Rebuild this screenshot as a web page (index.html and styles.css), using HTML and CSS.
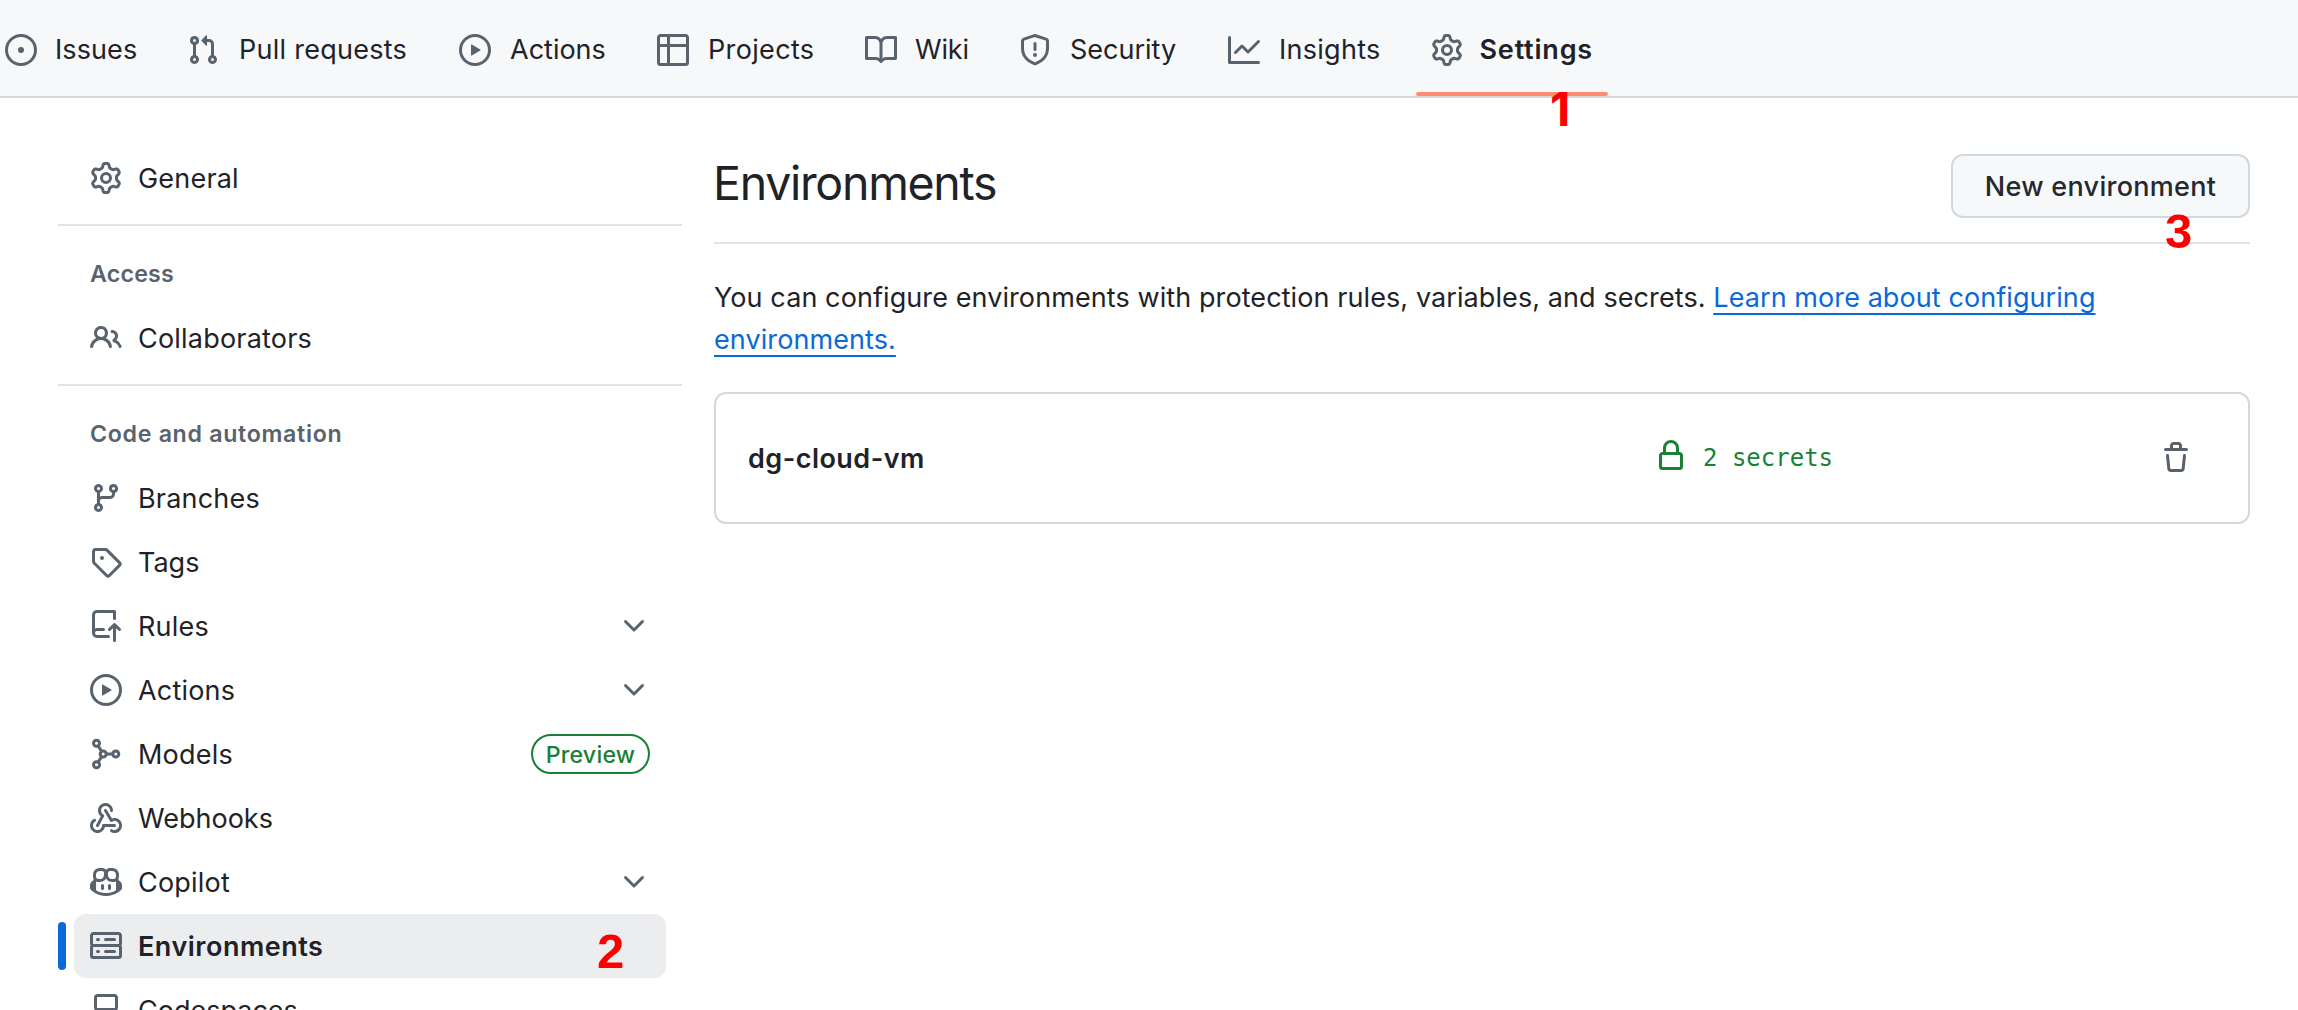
FILE: index.html
```
<!DOCTYPE html>
<html lang="en">
<head>
<meta charset="utf-8">
<title>Environments</title>
<link rel="stylesheet" href="styles.css">
</head>
<body>
<svg class="sprite" aria-hidden="true">
  <symbol id="issue" viewBox="0 0 16 16"><path d="M8 9.5a1.5 1.5 0 1 0 0-3 1.5 1.5 0 0 0 0 3Z"/><path d="M8 0a8 8 0 1 1 0 16A8 8 0 0 1 8 0ZM1.5 8a6.5 6.5 0 1 0 13 0 6.5 6.5 0 0 0-13 0Z"/></symbol>
  <symbol id="pull" viewBox="0 0 16 16"><path d="M1.5 3.25a2.25 2.25 0 1 1 3 2.122v5.256a2.251 2.251 0 1 1-1.5 0V5.372A2.25 2.25 0 0 1 1.5 3.25Zm5.677-.177L9.573.677A.25.25 0 0 1 10 .854V2.5h1A2.5 2.5 0 0 1 13.5 5v5.628a2.251 2.251 0 1 1-1.5 0V5a1 1 0 0 0-1-1h-1v1.646a.25.25 0 0 1-.427.177L7.177 3.427a.25.25 0 0 1 0-.354ZM3.75 2.5a.75.75 0 1 0 0 1.5.75.75 0 0 0 0-1.5Zm0 9.5a.75.75 0 1 0 0 1.5.75.75 0 0 0 0-1.5Zm8.25.75a.75.75 0 1 0 1.5 0 .75.75 0 0 0-1.5 0Z"/></symbol>
  <symbol id="play" viewBox="0 0 16 16"><path d="M8 0a8 8 0 1 1 0 16A8 8 0 0 1 8 0ZM1.5 8a6.5 6.5 0 1 0 13 0 6.5 6.5 0 0 0-13 0Zm4.879-2.773 4.264 2.559a.25.25 0 0 1 0 .428l-4.264 2.559A.25.25 0 0 1 6 10.559V5.442a.25.25 0 0 1 .379-.215Z"/></symbol>
  <symbol id="table" viewBox="0 0 16 16"><path d="M0 1.75C0 .784.784 0 1.75 0h12.5C15.216 0 16 .784 16 1.75v12.5A1.75 1.75 0 0 1 14.25 16H1.75A1.75 1.75 0 0 1 0 14.25ZM6.5 6.5v8h7.75a.25.25 0 0 0 .25-.25V6.5Zm8-1.5V1.75a.25.25 0 0 0-.25-.25H6.5V5Zm-13 1.5v7.75c0 .138.112.25.25.25H5v-8ZM5 5V1.5H1.75a.25.25 0 0 0-.25.25V5Z"/></symbol>
  <symbol id="book" viewBox="0 0 16 16"><path d="M0 1.75A.75.75 0 0 1 .75 1h4.253c1.227 0 2.317.59 3 1.501A3.743 3.743 0 0 1 11.006 1h4.245a.75.75 0 0 1 .75.75v10.5a.75.75 0 0 1-.75.75h-4.507a2.25 2.25 0 0 0-1.591.659l-.622.621a.75.75 0 0 1-1.06 0l-.622-.621A2.25 2.25 0 0 0 5.258 13H.75a.75.75 0 0 1-.75-.75Zm7.251 10.324.004-5.073-.002-2.253A2.25 2.25 0 0 0 5.003 2.5H1.5v9h3.757a3.75 3.75 0 0 1 1.994.574ZM8.755 4.75l-.004 7.322a3.752 3.752 0 0 1 1.992-.572H14.5v-9h-3.495a2.25 2.25 0 0 0-2.25 2.25Z"/></symbol>
  <symbol id="shield" viewBox="0 0 16 16"><path d="M7.467.133a1.748 1.748 0 0 1 1.066 0l5.25 1.68A1.75 1.75 0 0 1 15 3.48V7c0 1.566-.32 3.182-1.303 4.682-.983 1.498-2.585 2.813-5.032 3.855a1.697 1.697 0 0 1-1.33 0c-2.447-1.042-4.049-2.357-5.032-3.855C1.32 10.182 1 8.566 1 7V3.48a1.75 1.75 0 0 1 1.217-1.667Zm.61 1.429a.25.25 0 0 0-.153 0l-5.25 1.68a.25.25 0 0 0-.174.238V7c0 1.358.275 2.666 1.057 3.86.784 1.194 2.121 2.34 4.366 3.297a.196.196 0 0 0 .154 0c2.245-.956 3.582-2.104 4.366-3.298C13.225 9.666 13.5 8.36 13.5 7V3.48a.251.251 0 0 0-.174-.237l-5.25-1.68ZM8.75 4.75v3a.75.75 0 0 1-1.5 0v-3a.75.75 0 0 1 1.5 0ZM9 10.5a1 1 0 1 1-2 0 1 1 0 0 1 2 0Z"/></symbol>
  <symbol id="graph" viewBox="0 0 16 16"><path d="M1.5 1.75V13.5h13.75a.75.75 0 0 1 0 1.5H.75a.75.75 0 0 1-.75-.75V1.75a.75.75 0 0 1 1.5 0Zm14.28 2.53-5.25 5.25a.75.75 0 0 1-1.06 0L7 7.06 4.28 9.78a.751.751 0 0 1-1.042-.018.751.751 0 0 1-.018-1.042l3.25-3.25a.75.75 0 0 1 1.06 0L10 7.94l4.72-4.72a.751.751 0 0 1 1.042.018.751.751 0 0 1 .018 1.042Z"/></symbol>
  <symbol id="gear" viewBox="0 0 16 16"><path d="M8 0a8.2 8.2 0 0 1 .701.031C9.444.095 9.99.645 10.16 1.29l.288 1.107c.018.066.079.158.212.224.231.114.454.243.668.386.123.082.233.09.299.071l1.103-.303c.644-.176 1.392.021 1.82.63.27.385.506.792.704 1.218.315.675.111 1.422-.364 1.891l-.814.806c-.049.048-.098.147-.088.294.016.257.016.515 0 .772-.01.147.038.246.088.294l.814.806c.475.469.679 1.216.364 1.891a7.977 7.977 0 0 1-.704 1.217c-.428.61-1.176.807-1.82.63l-1.102-.302c-.067-.019-.177-.011-.3.071a5.909 5.909 0 0 1-.668.386c-.133.066-.194.158-.211.224l-.29 1.106c-.168.646-.715 1.196-1.458 1.26a8.006 8.006 0 0 1-1.402 0c-.743-.064-1.289-.614-1.458-1.26l-.289-1.106c-.018-.066-.079-.158-.212-.224a5.738 5.738 0 0 1-.668-.386c-.123-.082-.233-.09-.299-.071l-1.103.303c-.644.176-1.392-.021-1.82-.63a8.12 8.12 0 0 1-.704-1.218c-.315-.675-.111-1.422.363-1.891l.815-.806c.05-.048.098-.147.088-.294a6.214 6.214 0 0 1 0-.772c.01-.147-.038-.246-.088-.294l-.815-.806C.635 6.045.431 5.298.746 4.623a7.92 7.92 0 0 1 .704-1.217c.428-.61 1.176-.807 1.82-.63l1.102.302c.067.019.177.011.3-.071.214-.143.437-.272.668-.386.133-.066.194-.158.211-.224l.29-1.106C6.009.645 6.556.095 7.299.03 7.53.01 7.764 0 8 0Zm-.571 1.525c-.036.003-.108.036-.137.146l-.289 1.105c-.147.561-.549.967-.998 1.189-.173.086-.34.183-.5.29-.417.278-.97.423-1.529.27l-1.103-.303c-.109-.03-.175.016-.195.045-.22.312-.412.644-.573.99-.014.031-.021.11.059.19l.815.806c.411.406.562.957.53 1.456a4.709 4.709 0 0 0 0 .582c.032.499-.119 1.05-.53 1.456l-.815.806c-.081.08-.073.159-.059.19.162.346.353.677.573.989.02.03.085.076.195.046l1.102-.303c.56-.153 1.113-.008 1.53.27.161.107.328.204.501.29.447.222.85.629.997 1.189l.289 1.105c.029.109.101.143.137.146a6.6 6.6 0 0 0 1.142 0c.036-.003.108-.036.137-.146l.289-1.105c.147-.561.549-.967.998-1.189.173-.086.34-.183.5-.29.417-.278.97-.423 1.529-.27l1.103.303c.109.029.175-.016.195-.045.22-.313.411-.644.573-.99.014-.031.021-.11-.059-.19l-.815-.806c-.411-.406-.562-.957-.53-1.456a4.709 4.709 0 0 0 0-.582c-.032-.499.119-1.05.53-1.456l.815-.806c.081-.08.073-.159.059-.19a6.464 6.464 0 0 0-.573-.989c-.02-.03-.085-.076-.195-.046l-1.102.303c-.56.153-1.113.008-1.53-.27a4.44 4.44 0 0 0-.501-.29c-.447-.222-.85-.629-.997-1.189l-.289-1.105c-.029-.11-.101-.143-.137-.146a6.6 6.6 0 0 0-1.142 0ZM11 8a3 3 0 1 1-6 0 3 3 0 0 1 6 0ZM9.5 8a1.5 1.5 0 1 0-3.001.001A1.5 1.5 0 0 0 9.5 8Z"/></symbol>
  <symbol id="people" viewBox="0 0 16 16"><path d="M2 5.5a3.5 3.5 0 1 1 5.898 2.549 5.508 5.508 0 0 1 3.034 4.084.75.75 0 1 1-1.482.235 4 4 0 0 0-7.9 0 .75.75 0 0 1-1.482-.236A5.507 5.507 0 0 1 3.102 8.05 3.493 3.493 0 0 1 2 5.5ZM11 4a3.001 3.001 0 0 1 2.22 5.018 5.01 5.01 0 0 1 2.56 3.012.749.749 0 0 1-.885.954.752.752 0 0 1-.549-.514 3.507 3.507 0 0 0-2.522-2.372.75.75 0 0 1-.574-.73v-.352a.75.75 0 0 1 .416-.672A1.5 1.5 0 0 0 11 5.5.75.75 0 0 1 11 4Zm-5.5-.5a2 2 0 1 0-.001 3.999A2 2 0 0 0 5.5 3.5Z"/></symbol>
  <symbol id="branch" viewBox="0 0 16 16"><path d="M9.5 3.25a2.25 2.25 0 1 1 3 2.122V6A2.5 2.5 0 0 1 10 8.5H6a1 1 0 0 0-1 1v1.128a2.251 2.251 0 1 1-1.5 0V5.372a2.25 2.25 0 1 1 1.5 0v1.836A2.493 2.493 0 0 1 6 7h4a1 1 0 0 0 1-1v-.628A2.25 2.25 0 0 1 9.5 3.25Zm-6 0a.75.75 0 1 0 1.5 0 .75.75 0 0 0-1.5 0Zm8.25-.75a.75.75 0 1 0 0 1.5.75.75 0 0 0 0-1.5ZM4.25 12a.75.75 0 1 0 0 1.5.75.75 0 0 0 0-1.5Z"/></symbol>
  <symbol id="tag" viewBox="0 0 16 16"><path d="M1 7.775V2.75C1 1.784 1.784 1 2.75 1h5.025c.464 0 .91.184 1.238.513l6.25 6.25a1.75 1.75 0 0 1 0 2.474l-5.026 5.026a1.75 1.75 0 0 1-2.474 0l-6.25-6.25A1.752 1.752 0 0 1 1 7.775Zm1.5 0c0 .066.026.13.073.177l6.25 6.25a.25.25 0 0 0 .354 0l5.025-5.025a.25.25 0 0 0 0-.354l-6.25-6.25a.25.25 0 0 0-.177-.073H2.75a.25.25 0 0 0-.25.25ZM6 5a1 1 0 1 1 0 2 1 1 0 0 1 0-2Z"/></symbol>
  <symbol id="push" viewBox="0 0 16 16"><path d="M1 2.5A2.5 2.5 0 0 1 3.5 0h8.75a.75.75 0 0 1 .75.75v3.5a.75.75 0 0 1-1.5 0V1.5h-8a1 1 0 0 0-1 1v6.708A2.493 2.493 0 0 1 3.5 9h3.25a.75.75 0 0 1 0 1.5H3.5a1 1 0 0 0 0 2h5.75a.75.75 0 0 1 0 1.5H3.5A2.5 2.5 0 0 1 1 11.5Zm13.23 7.79h-.001l-1.224-1.224v6.184a.75.75 0 0 1-1.5 0V9.066L10.28 10.29a.75.75 0 0 1-1.06-1.061l2.505-2.504a.75.75 0 0 1 1.06 0L15.29 9.23a.751.751 0 0 1-.018 1.042.751.751 0 0 1-1.042.018Z"/></symbol>
  <symbol id="model" viewBox="0 0 16 16"><g fill="none" stroke="currentColor" stroke-width="1.5"><circle cx="3.25" cy="2.6" r="1.5"/><circle cx="3.25" cy="13.4" r="1.5"/><circle cx="6.6" cy="8" r="1.5"/><circle cx="12.9" cy="8" r="1.5"/><path d="m4 3.9 1.9 2.8M4 12.1l1.9-2.8M8.1 8h3.3"/></g></symbol>
  <symbol id="webhook" viewBox="0 0 16 16"><path d="M5.5 4.25a2.25 2.25 0 0 1 4.5 0 .75.75 0 0 0 1.5 0 3.75 3.75 0 1 0-6.14 2.889l-2.272 4.258a.75.75 0 0 0 1.324.706L7 7.25a.75.75 0 0 0-.309-1.015A2.25 2.25 0 0 1 5.5 4.25Z"/><path d="M7.364 3.607a.75.75 0 0 1 1.03.257l2.608 4.349a3.75 3.75 0 1 1-.628 6.785.75.75 0 0 1 .752-1.299 2.25 2.25 0 1 0-.033-3.88.75.75 0 0 1-1.03-.256L7.107 4.636a.75.75 0 0 1 .257-1.03Z"/><path d="M2.9 8.776A.75.75 0 0 1 2.625 9.8 2.25 2.25 0 1 0 6 11.75a.75.75 0 0 1 .75-.751h5.5a.75.75 0 0 1 0 1.5H7.425a3.751 3.751 0 1 1-5.55-3.998.75.75 0 0 1 1.024.274Z"/></symbol>
  <symbol id="copilot" viewBox="0 0 16 16"><path d="M7.998 15.035c-4.562 0-7.873-2.914-7.998-3.749V9.338c.085-.628.677-1.686 1.588-2.065.013-.07.024-.143.036-.218.029-.183.06-.384.126-.612-.201-.508-.254-1.084-.254-1.656 0-.87.128-1.769.693-2.484.579-.733 1.494-1.124 2.724-1.261 1.206-.134 2.262.034 2.944.765.05.053.096.108.139.165.044-.057.094-.112.143-.165.682-.731 1.738-.899 2.944-.765 1.23.137 2.145.528 2.724 1.261.566.715.693 1.614.693 2.484 0 .572-.053 1.148-.254 1.656.066.228.098.429.126.612.012.076.024.148.037.218.924.385 1.522 1.471 1.591 2.095v1.872c0 .766-3.351 3.795-8.002 3.795Zm0-1.485c2.28 0 4.584-1.11 5.002-1.433V7.862l-.023-.116c-.49.21-1.075.291-1.727.291-1.146 0-2.059-.327-2.71-.991A3.222 3.222 0 0 1 8 6.303a3.24 3.24 0 0 1-.544.743c-.65.664-1.563.991-2.71.991-.652 0-1.236-.081-1.727-.291l-.023.116v4.255c.419.323 2.722 1.433 5.002 1.433ZM6.762 2.83c-.193-.206-.637-.413-1.682-.297-1.019.113-1.479.404-1.713.7-.247.312-.369.789-.369 1.554 0 .793.129 1.171.308 1.371.162.181.519.379 1.442.379.853 0 1.339-.235 1.638-.54.315-.322.527-.827.617-1.553.117-.935-.037-1.395-.241-1.614Zm4.155-.297c-1.044-.116-1.488.091-1.681.297-.204.219-.359.679-.242 1.614.091.726.303 1.231.618 1.553.299.305.784.54 1.638.54.922 0 1.28-.198 1.442-.379.179-.2.308-.578.308-1.371 0-.765-.123-1.242-.37-1.554-.233-.296-.693-.587-1.713-.7Z"/><path d="M6.25 9.037a.75.75 0 0 1 .75.75v1.501a.75.75 0 0 1-1.5 0V9.787a.75.75 0 0 1 .75-.75Zm4.25.75v1.501a.75.75 0 0 1-1.5 0V9.787a.75.75 0 0 1 1.5 0Z"/></symbol>
  <symbol id="server" viewBox="0 0 16 16"><path d="M1.75 1h12.5c.966 0 1.75.784 1.75 1.75v4c0 .372-.116.717-.314 1 .198.283.314.628.314 1v4a1.75 1.75 0 0 1-1.75 1.75H1.75A1.75 1.75 0 0 1 0 12.75v-4c0-.358.109-.707.314-1a1.739 1.739 0 0 1-.314-1v-4C0 1.784.784 1 1.75 1ZM1.5 2.75v4c0 .138.112.25.25.25h12.5a.25.25 0 0 0 .25-.25v-4a.25.25 0 0 0-.25-.25H1.75a.25.25 0 0 0-.25.25Zm.25 5.75a.25.25 0 0 0-.25.25v4c0 .138.112.25.25.25h12.5a.25.25 0 0 0 .25-.25v-4a.25.25 0 0 0-.25-.25ZM7 4.75A.75.75 0 0 1 7.75 4h4.5a.75.75 0 0 1 0 1.5h-4.5A.75.75 0 0 1 7 4.75ZM7.75 10h4.5a.75.75 0 0 1 0 1.5h-4.5a.75.75 0 0 1 0-1.5ZM3 4.75A.75.75 0 0 1 3.75 4h.5a.75.75 0 0 1 0 1.5h-.5A.75.75 0 0 1 3 4.75ZM3.75 10h.5a.75.75 0 0 1 0 1.5h-.5a.75.75 0 0 1 0-1.5Z"/></symbol>
  <symbol id="codespaces" viewBox="0 0 16 16"><path d="M0 11.25c0-.966.784-1.75 1.75-1.75h12.5c.966 0 1.75.784 1.75 1.75v3A1.75 1.75 0 0 1 14.25 16H1.75A1.75 1.75 0 0 1 0 14.25Zm2-9.5C2 .784 2.784 0 3.75 0h8.5C13.216 0 14 .784 14 1.75v5a1.75 1.75 0 0 1-1.75 1.75h-8.5A1.75 1.75 0 0 1 2 6.75Zm1.75-.25a.25.25 0 0 0-.25.25v5c0 .138.112.25.25.25h8.5a.25.25 0 0 0 .25-.25v-5a.25.25 0 0 0-.25-.25Zm-2 9.5a.25.25 0 0 0-.25.25v3c0 .138.112.25.25.25h12.5a.25.25 0 0 0 .25-.25v-3a.25.25 0 0 0-.25-.25Z"/></symbol>
  <symbol id="chevron" viewBox="0 0 16 16"><path d="M12.78 5.22a.749.749 0 0 1 0 1.06l-4.25 4.25a.749.749 0 0 1-1.06 0L3.22 6.28a.749.749 0 1 1 1.06-1.06L8 8.939l3.72-3.719a.749.749 0 0 1 1.06 0Z"/></symbol>
  <symbol id="lock" viewBox="0 0 16 16"><path d="M4 4a4 4 0 0 1 8 0v2h.25c.966 0 1.75.784 1.75 1.75v5.5A1.75 1.75 0 0 1 12.25 15h-8.5A1.75 1.75 0 0 1 2 13.25v-5.5C2 6.784 2.784 6 3.75 6H4Zm8.25 3.5h-8.5a.25.25 0 0 0-.25.25v5.5c0 .138.112.25.25.25h8.5a.25.25 0 0 0 .25-.25v-5.5a.25.25 0 0 0-.25-.25ZM10.5 6V4a2.5 2.5 0 1 0-5 0v2Z"/></symbol>
  <symbol id="trash" viewBox="0 0 16 16"><path d="M11 1.75V3h2.25a.75.75 0 0 1 0 1.5H2.75a.75.75 0 0 1 0-1.5H5V1.75C5 .784 5.784 0 6.75 0h2.5C10.216 0 11 .784 11 1.75ZM4.496 6.675l.66 6.6a.25.25 0 0 0 .249.225h5.19a.25.25 0 0 0 .249-.225l.66-6.6a.75.75 0 0 1 1.492.149l-.66 6.6A1.748 1.748 0 0 1 10.595 15h-5.19a1.75 1.75 0 0 1-1.741-1.575l-.66-6.6a.75.75 0 1 1 1.492-.15ZM6.5 1.75V3h3V1.75a.25.25 0 0 0-.25-.25h-2.5a.25.25 0 0 0-.25.25Z"/></symbol>
</svg>

<nav class="tabs">
  <a class="tab tab-issues"><svg class="icon"><use href="#issue"/></svg><span>Issues</span></a>
  <a class="tab tab-pulls"><svg class="icon"><use href="#pull"/></svg><span>Pull requests</span></a>
  <a class="tab tab-actions"><svg class="icon"><use href="#play"/></svg><span>Actions</span></a>
  <a class="tab tab-projects"><svg class="icon"><use href="#table"/></svg><span>Projects</span></a>
  <a class="tab tab-wiki"><svg class="icon"><use href="#book"/></svg><span>Wiki</span></a>
  <a class="tab tab-security"><svg class="icon"><use href="#shield"/></svg><span>Security</span></a>
  <a class="tab tab-insights"><svg class="icon"><use href="#graph"/></svg><span>Insights</span></a>
  <a class="tab tab-settings"><svg class="icon"><use href="#gear"/></svg><span>Settings</span></a>
</nav>

<div class="layout">
  <aside class="sidebar">
    <a class="row"><svg class="icon"><use href="#gear"/></svg><span class="label">General</span></a>
    <hr class="rule">
    <h3 class="group">Access</h3>
    <a class="row"><svg class="icon"><use href="#people"/></svg><span class="label">Collaborators</span></a>
    <hr class="rule">
    <h3 class="group group-wide">Code and automation</h3>
    <a class="row"><svg class="icon"><use href="#branch"/></svg><span class="label">Branches</span></a>
    <a class="row tight"><svg class="icon"><use href="#tag"/></svg><span class="label">Tags</span></a>
    <a class="row"><svg class="icon"><use href="#push"/></svg><span class="label">Rules</span><svg class="icon end"><use href="#chevron"/></svg></a>
    <a class="row"><svg class="icon"><use href="#play"/></svg><span class="label">Actions</span><svg class="icon end"><use href="#chevron"/></svg></a>
    <a class="row"><svg class="icon"><use href="#model"/></svg><span class="label">Models</span><b class="badge end">Preview</b></a>
    <a class="row tight"><svg class="icon"><use href="#webhook"/></svg><span class="label">Webhooks</span></a>
    <a class="row"><svg class="icon"><use href="#copilot"/></svg><span class="label">Copilot</span><svg class="icon end"><use href="#chevron"/></svg></a>
    <a class="row current"><svg class="icon"><use href="#server"/></svg><span class="label">Environments</span></a>
    <a class="row tight"><svg class="icon"><use href="#codespaces"/></svg><span class="label">Codespaces</span></a>
  </aside>

  <main class="content">
    <header class="head">
      <h1 class="title">Environments</h1>
      <button class="button">New environment</button>
    </header>
    <p class="intro">You can configure environments with protection rules, variables, and secrets. <a class="link">Learn more about configuring environments.</a></p>
    <section class="box">
      <strong class="name">dg-cloud-vm</strong>
      <span class="secrets"><svg class="icon"><use href="#lock"/></svg>2 secrets</span>
      <svg class="icon"><use href="#trash"/></svg>
    </section>
  </main>
</div>

<span class="mark mark-1">1</span>
<span class="mark mark-2">2</span>
<span class="mark mark-3">3</span>
</body>
</html>
```
FILE: styles.css
```
* { box-sizing: border-box; }

body {
  position: relative;
  height: 1010px;
  margin: 0;
  overflow: hidden;
  background: #fff;
  color: #1f2328;
  font: 400 27px/42px Inter, "Liberation Sans", sans-serif;
  letter-spacing: 0.2px;
}

.sprite { display: none; }

.icon {
  flex: none;
  width: 32px;
  height: 32px;
  color: #59636e;
  fill: currentColor;
}

/* Repository tabs */
.tabs {
  display: flex;
  height: 98px;
  padding: 4px 0 0 5px;
  background: #f6f8fa;
  border-bottom: 2px solid #d1d9e0;
}

.tab {
  display: flex;
  flex: none;
  align-items: center;
  gap: 18px;
  white-space: nowrap;
}

.tab-issues { width: 182px; letter-spacing: 0.1px; }
.tab-pulls { width: 272px; gap: 20px; letter-spacing: 0.26px; }
.tab-actions { width: 198px; gap: 19px; letter-spacing: 0; }
.tab-projects { width: 208px; gap: 19px; letter-spacing: 0.35px; }
.tab-wiki { width: 154px; letter-spacing: -0.15px; }
.tab-security { width: 209px; gap: 19px; letter-spacing: 0; }
.tab-insights { width: 187px; gap: 19px; letter-spacing: 0.27px; }

.tab-settings {
  position: relative;
  width: 193px;
  gap: 16.5px;
  padding-left: 16px;
  font-weight: 600;
  letter-spacing: 0.8px;
}

.tab-settings::after {
  content: "";
  position: absolute;
  right: 0;
  bottom: 0;
  left: 1px;
  height: 4px;
  border-radius: 2px;
  background: #fd8c73;
}

/* Settings layout */
.layout {
  display: grid;
  grid-template-columns: 624px 1fr;
  gap: 32px;
  padding: 48px 48px 0 58px;
}

.row {
  position: relative;
  display: flex;
  align-items: center;
  gap: 16px;
  height: 64px;
  margin: 0 16px;
  padding: 0 16px;
  border-radius: 12px;
}

.label { padding-top: 2px; }
.tight { letter-spacing: 0; }
.end { margin-left: auto; }

.current {
  background: #ecedef;
  font-weight: 600;
  letter-spacing: 0.5px;
}

.current::before {
  content: "";
  position: absolute;
  top: 8px;
  left: -16px;
  width: 8px;
  height: 48px;
  border-radius: 4px;
  background: #0969da;
}

.rule {
  height: 2px;
  margin: 14px 0 16px;
  border: 0;
  background: #dee3e8;
}

.group {
  margin: 0;
  padding: 0 32px;
  color: #59636e;
  font-size: 23.2px;
  font-weight: 600;
  line-height: 64px;
}

.group-wide { letter-spacing: 0.68px; }

.badge {
  width: 119px;
  height: 40px;
  border: 2px solid #1a7f37;
  border-radius: 20px;
  color: #1a7f37;
  font-size: 23.2px;
  font-weight: 500;
  line-height: 38px;
  text-align: center;
}

/* Main column */
.head {
  display: flex;
  align-items: flex-start;
  justify-content: space-between;
  height: 98px;
  padding-top: 8px;
  border-bottom: 2px solid #dee3e8;
}

.title {
  margin: 0 0 0 -1px;
  font-size: 46.5px;
  font-weight: 400;
  line-height: 58px;
  letter-spacing: -1.3px;
}

.button {
  width: 299px;
  height: 64px;
  padding: 2px 0 0;
  border: 2px solid #d1d9e0;
  border-radius: 12px;
  background: #f6f8fa;
  color: #25292e;
  font: inherit;
  font-weight: 500;
  letter-spacing: 0.28px;
}

.intro {
  margin: 33px 0 31px;
  letter-spacing: 0.09px;
}

.link {
  color: #0969da;
  letter-spacing: 0.08px;
  text-decoration: underline 2px;
  text-decoration-skip-ink: none;
  text-underline-offset: 6px;
}

.box {
  display: grid;
  grid-template-columns: 907px 1fr 32px;
  align-items: center;
  height: 132px;
  padding: 0 56px 0 32px;
  border: 2px solid #d1d9e0;
  border-radius: 12px;
}

.name { padding-top: 2px; font-weight: 600; letter-spacing: 0.47px; }

.secrets {
  display: flex;
  align-items: center;
  gap: 16px;
  color: #1a7f37;
  font: 24px/32px "DejaVu Sans Mono", monospace;
  letter-spacing: 0;
}

.secrets .icon { margin-bottom: 4px; color: inherit; }

/* Step numbers laid over the page */
.mark {
  position: absolute;
  color: #f00;
  font: 700 49px/48px "Liberation Sans", Arial, sans-serif;
  letter-spacing: 0;
}

.mark-1 {
  top: 85px;
  left: 1550px;
  font-family: Inter, sans-serif;
  font-size: 47px;
}

.mark-2 { top: 927px; left: 597px; }
.mark-3 { top: 207px; left: 2165px; }
```
